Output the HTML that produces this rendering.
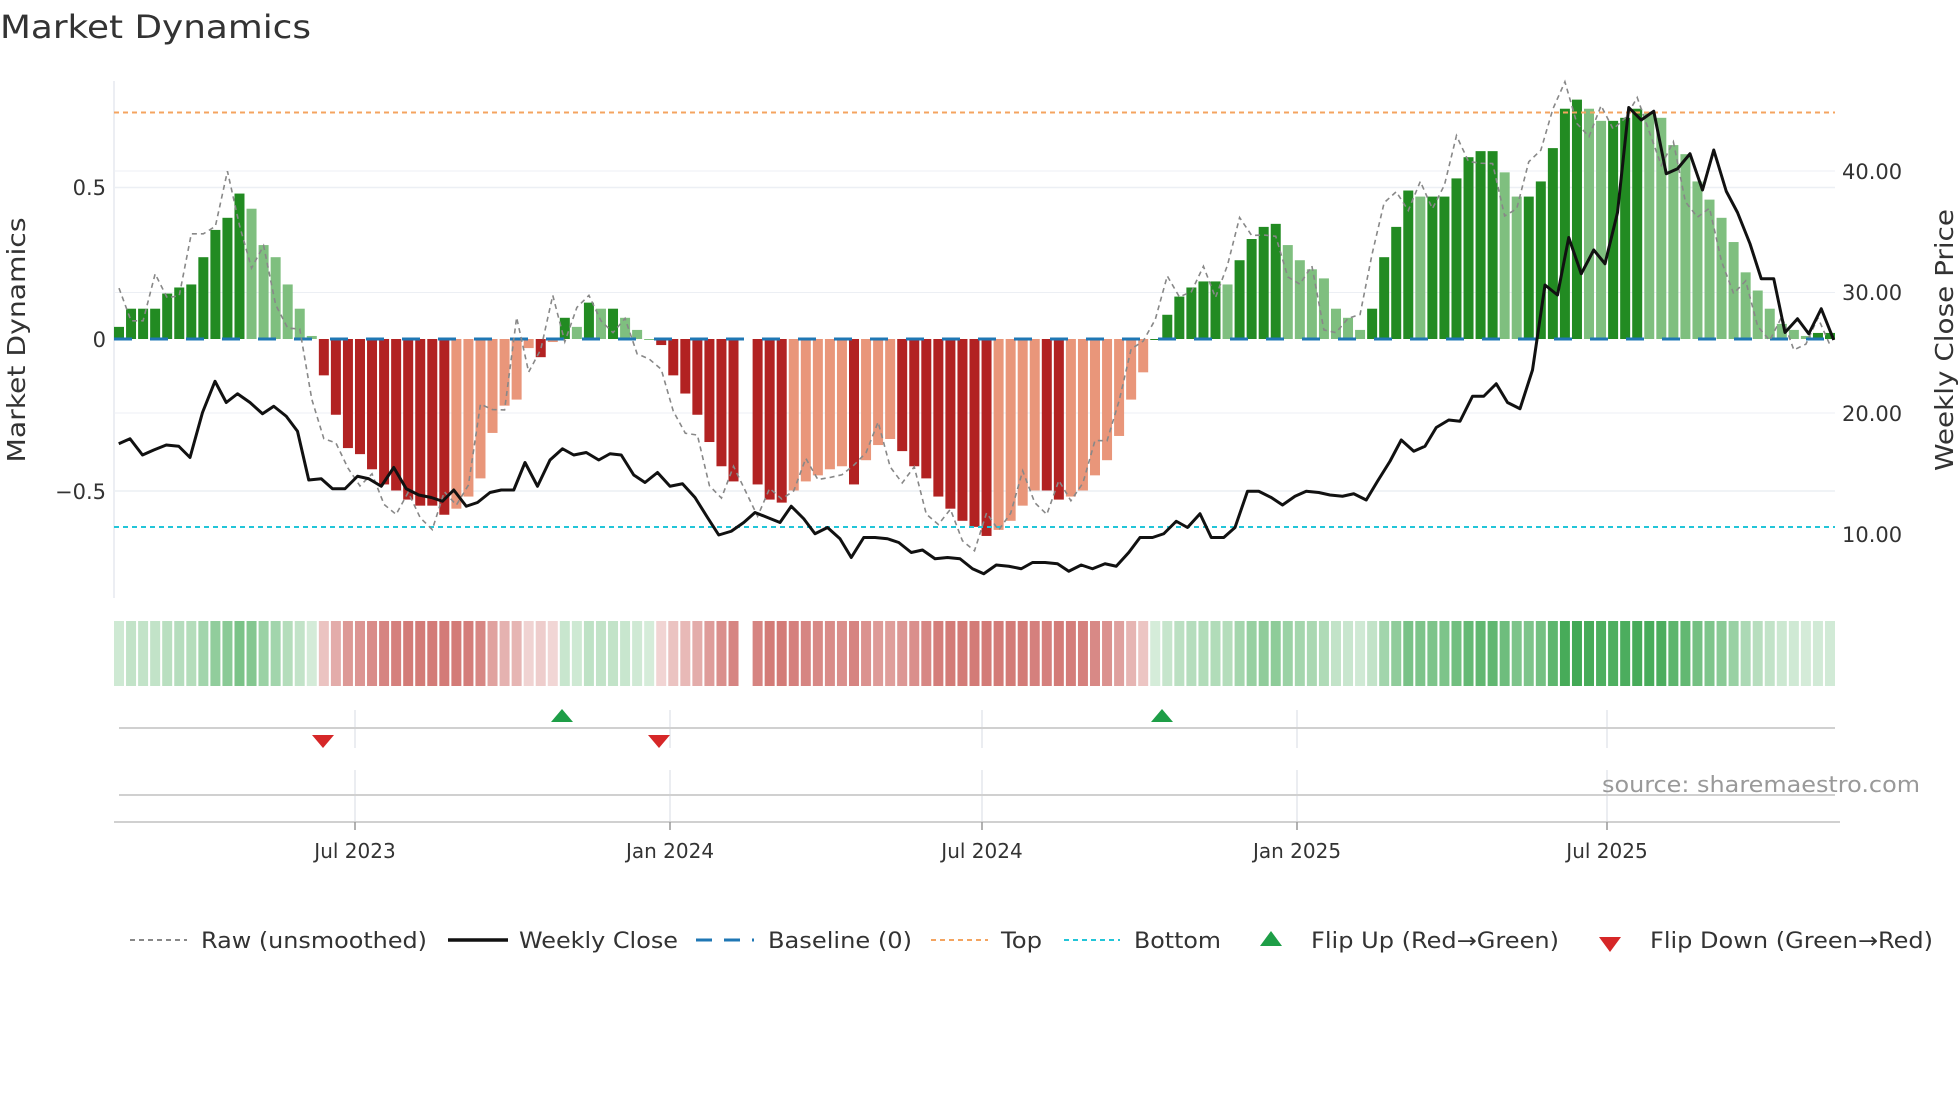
<!DOCTYPE html>
<html><head><meta charset="utf-8"><style>
html,body{margin:0;padding:0;background:#fff;width:1960px;height:1102px;overflow:hidden}
svg text{font-family:"DejaVu Sans","Liberation Sans",sans-serif;fill:#333}
</style></head><body>
<svg id="s" width="1960" height="1102" viewBox="0 0 1960 1102" xmlns="http://www.w3.org/2000/svg">
<text x="0" y="38" font-size="32" textLength="311" lengthAdjust="spacingAndGlyphs">Market Dynamics</text>
<line x1="114" y1="81" x2="114" y2="598" stroke="#e6e9ef" stroke-width="1.5"/>
<line x1="114" y1="187.5" x2="1835" y2="187.5" stroke="#eceff4" stroke-width="1.5"/>
<line x1="114" y1="491" x2="1835" y2="491" stroke="#eceff4" stroke-width="1.5"/>
<line x1="114" y1="171" x2="1835" y2="171" stroke="#eceff4" stroke-width="1"/>
<line x1="114" y1="292.5" x2="1835" y2="292.5" stroke="#eceff4" stroke-width="1"/>
<line x1="114" y1="413" x2="1835" y2="413" stroke="#eceff4" stroke-width="1"/>
<g font-size="21" text-anchor="end">
<text x="106" y="195">0.5</text><text x="106" y="347">0</text><text x="106" y="499">−0.5</text>
</g>
<g font-size="21">
<text x="1842" y="179">40.00</text><text x="1842" y="300">30.00</text><text x="1842" y="421">20.00</text><text x="1842" y="542">10.00</text>
</g>
<text font-size="25" transform="translate(25,340) rotate(-90)" text-anchor="middle" textLength="245" lengthAdjust="spacingAndGlyphs">Market Dynamics</text>
<text font-size="25" transform="translate(1953,340) rotate(-90)" text-anchor="middle" textLength="262" lengthAdjust="spacingAndGlyphs">Weekly Close Price</text>
<g id="bars"></g>
<line x1="114" y1="112.5" x2="1835" y2="112.5" stroke="#f4a460" stroke-width="2" stroke-dasharray="5,4"/>
<line x1="114" y1="527" x2="1835" y2="527" stroke="#22c5d8" stroke-width="2" stroke-dasharray="5,4"/>
<line x1="114" y1="339" x2="1835" y2="339" stroke="#1f77b4" stroke-width="3" stroke-dasharray="18,18"/>
<polyline id="raw" fill="none" stroke="#888" stroke-width="1.6" stroke-dasharray="5,4"/>
<polyline id="price" fill="none" stroke="#111" stroke-width="3" stroke-linejoin="round"/>
<g id="heat"></g>
<g stroke="#e4e7ec" stroke-width="1.5">
<line x1="355" y1="710" x2="355" y2="748"/><line x1="670" y1="710" x2="670" y2="748"/><line x1="982" y1="710" x2="982" y2="748"/><line x1="1297" y1="710" x2="1297" y2="748"/><line x1="1607" y1="710" x2="1607" y2="748"/>
<line x1="355" y1="770" x2="355" y2="822"/><line x1="670" y1="770" x2="670" y2="822"/><line x1="982" y1="770" x2="982" y2="822"/><line x1="1297" y1="770" x2="1297" y2="822"/><line x1="1607" y1="770" x2="1607" y2="822"/>
</g>
<line x1="119" y1="728" x2="1835" y2="728" stroke="#d0d0d0" stroke-width="2"/>
<line x1="119" y1="795" x2="1835" y2="795" stroke="#d0d0d0" stroke-width="2"/>
<line x1="114" y1="822" x2="1840" y2="822" stroke="#d0d0d0" stroke-width="2"/>
<g stroke="#999" stroke-width="1.5"><line x1="355" y1="822" x2="355" y2="830"/><line x1="670" y1="822" x2="670" y2="830"/><line x1="982" y1="822" x2="982" y2="830"/><line x1="1297" y1="822" x2="1297" y2="830"/><line x1="1607" y1="822" x2="1607" y2="830"/></g>
<polygon points="562,709 551,722 573,722" fill="#1e9e47"/>
<polygon points="1162,709 1151,722 1173,722" fill="#1e9e47"/>
<polygon points="323,748 312,735 334,735" fill="#d62728"/>
<polygon points="659,748 648,735 670,735" fill="#d62728"/>
<text x="1602" y="792" font-size="22" fill="#999" style="fill:#999" textLength="318" lengthAdjust="spacingAndGlyphs">source: sharemaestro.com</text>
<g font-size="20" text-anchor="middle">
<text x="355" y="858">Jul 2023</text><text x="670" y="858">Jan 2024</text><text x="982" y="858">Jul 2024</text><text x="1297" y="858">Jan 2025</text><text x="1607" y="858">Jul 2025</text>
</g>
<g font-size="22">
<line x1="130" y1="940" x2="187" y2="940" stroke="#888" stroke-width="2" stroke-dasharray="5,4"/>
<text x="201" y="948" textLength="226" lengthAdjust="spacingAndGlyphs">Raw (unsmoothed)</text>
<line x1="448" y1="940" x2="508" y2="940" stroke="#111" stroke-width="3.5"/>
<text x="519" y="948" textLength="159" lengthAdjust="spacingAndGlyphs">Weekly Close</text>
<line x1="696" y1="940" x2="754" y2="940" stroke="#1f77b4" stroke-width="3" stroke-dasharray="16,12"/>
<text x="768" y="948" textLength="144" lengthAdjust="spacingAndGlyphs">Baseline (0)</text>
<line x1="931" y1="940" x2="988" y2="940" stroke="#f4a460" stroke-width="2" stroke-dasharray="5,4"/>
<text x="1001" y="948" textLength="41" lengthAdjust="spacingAndGlyphs">Top</text>
<line x1="1064" y1="940" x2="1120" y2="940" stroke="#22c5d8" stroke-width="2" stroke-dasharray="5,4"/>
<text x="1134" y="948" textLength="87" lengthAdjust="spacingAndGlyphs">Bottom</text>
<polygon points="1271,931 1260,946 1282,946" fill="#1e9e47"/>
<text x="1311" y="948" textLength="248" lengthAdjust="spacingAndGlyphs">Flip Up (Red→Green)</text>
<polygon points="1610,952 1599,937 1621,937" fill="#d62728"/>
<text x="1650" y="948" textLength="283" lengthAdjust="spacingAndGlyphs">Flip Down (Green→Red)</text>
</g>
</svg>
<script>
var V=[0.04,0.1,0.1,0.1,0.15,0.17,0.18,0.27,0.36,0.4,0.48,0.43,0.31,0.27,0.18,0.1,0.01,-0.12,-0.25,-0.36,-0.38,-0.43,-0.48,-0.5,-0.53,-0.55,-0.55,-0.58,-0.56,-0.52,-0.46,-0.31,-0.22,-0.2,-0.03,-0.06,-0.01,0.07,0.04,0.12,0.1,0.1,0.07,0.03,0.0,-0.02,-0.12,-0.18,-0.25,-0.34,-0.42,-0.47,null,-0.48,-0.53,-0.54,-0.5,-0.47,-0.45,-0.43,-0.42,-0.48,-0.4,-0.35,-0.33,-0.37,-0.42,-0.46,-0.52,-0.56,-0.6,-0.62,-0.65,-0.63,-0.6,-0.55,-0.5,-0.5,-0.53,-0.52,-0.5,-0.45,-0.4,-0.32,-0.2,-0.11,0.0,0.08,0.14,0.17,0.19,0.19,0.18,0.26,0.33,0.37,0.38,0.31,0.26,0.23,0.2,0.1,0.07,0.03,0.1,0.27,0.37,0.49,0.47,0.47,0.47,0.53,0.6,0.62,0.62,0.55,0.47,0.47,0.52,0.63,0.76,0.79,0.76,0.72,0.72,0.73,0.76,0.75,0.73,0.64,0.61,0.52,0.46,0.4,0.32,0.22,0.16,0.1,0.05,0.03,0.01,0.02,0.02];
var P=[[95,355],[104,351],[114,364],[123,360],[133,356],[143,357],[152,366],[162,330],[172,305],[181,322],[190,315],[200,322],[210,331],[219,325],[229,333],[238,345],[247,384],[257,383],[266,391],[276,391],[286,381],[295,383],[305,389],[315,374],[325,391],[335,396],[345,398],[354,401],[363,392],[373,405],[382,402],[392,394],[401,392],[411,392],[420,370],[430,389],[440,368],[450,359],[459,364],[469,362],[479,368],[488,363],[497,364],[507,380],[516,386],[526,378],[536,389],[546,387],[556,398],[566,414],[575,428],[585,425],[595,418],[604,410],[614,414],[624,418],[633,405],[643,415],[652,427],[662,422],[672,431],[681,446],[691,430],[700,430],[710,431],[719,434],[729,442],[738,440],[748,447],[758,446],[768,447],[778,455],[787,459],[797,452],[807,453],[817,455],[826,450],[836,450],[846,451],[855,457],[865,452],[874,455],[884,451],[893,453],[903,442],[912,430],[922,430],[931,427],[941,417],[950,422],[960,411],[969,430],[979,430],[988,422],[998,393],[1007,393],[1017,398],[1026,404],[1036,397],[1045,393],[1055,394],[1064,396],[1074,397],[1083,395],[1093,400],[1102,385],[1112,369],[1121,352],[1131,361],[1140,357],[1149,342],[1159,336],[1168,337],[1178,317],[1187,317],[1197,307],[1206,322],[1216,327],[1226,296],[1236,228],[1246,236],[1255,190],[1265,219],[1275,200],[1284,211],[1294,170],[1303,86],[1313,96],[1323,89],[1333,139],[1342,135],[1352,123],[1362,152],[1371,120],[1381,153],[1390,170],[1400,195],[1409,223],[1419,223],[1428,266],[1438,255],[1447,267],[1457,247],[1467,272]];
var NS="http://www.w3.org/2000/svg",n=V.length,x0=119,dx=(1830-119)/(n-1);
function el(t,a,p){var e=document.createElementNS(NS,t);for(var k in a)e.setAttribute(k,a[k]);p.appendChild(e);return e}
var bars=document.getElementById('bars'),heat=document.getElementById('heat');
function Y(v){return 339-v*303}
var raw=[];
for(var i=0;i<n;i++){var v=V[i];var x=x0+i*dx;
 if(v===null){continue}
 var pv=(i>0&&V[i-1]!==null)?V[i-1]:(i>1?V[i-2]:0);
 var col;
 if(v>=0) col=(v>=pv)?'#228b22':'#7fbf7f'; else col=(v<=pv)?'#b22222':'#e9967a';
 var y=Y(v),h=Math.abs(339-y);
 el('rect',{x:x-5,y:Math.min(y,339),width:10,height:Math.max(h,1),fill:col},bars);
 var a=Math.min(0.9,0.2+Math.abs(v)*0.9);
 var hc=v>=0?'rgba(46,160,67,'+a+')':'rgba(190,60,55,'+Math.min(0.68,a)+')';
 el('rect',{x:x-5,y:621,width:10,height:65,fill:hc},heat);
 var nv=(i+1<n&&V[i+1]!==null)?V[i+1]:v;
 raw.push(x+','+Y(v+(nv-v)*1.3+(i%3==0?0.05:-0.04)));
}
document.getElementById('raw').setAttribute('points',raw.join(' '));
document.getElementById('price').setAttribute('points',P.map(function(p){return (p[0]*1.25)+','+(p[1]*1.25)}).join(' '));
</script>
</body></html>
